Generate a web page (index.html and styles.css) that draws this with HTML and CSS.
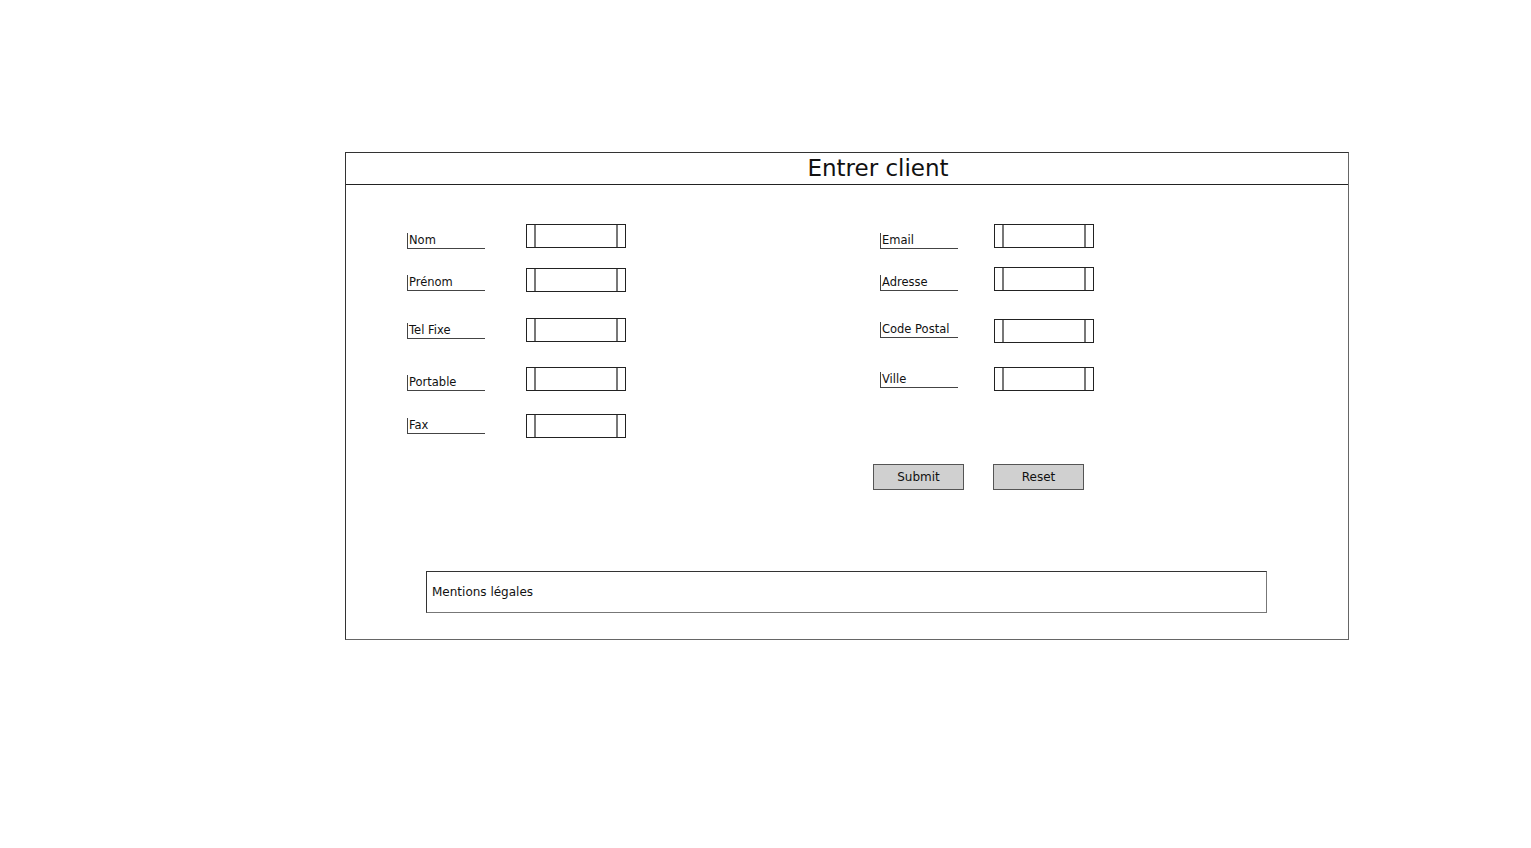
FILE: index.html
```html
<!DOCTYPE html>
<html lang="fr">
<head>
    <meta charset="UTF-8">
    <meta name="viewport" content="width=device-width, initial-scale=1.0">
    <title>Entrer client</title>
    <link rel="stylesheet" href="styles.css">
</head>
<body>
    <div class="page">
        <div class="frame">
            <div class="frame-title">Entrer client</div>
            <div class="frame-body">
                <div class="columns">
                    <div class="col col-left">
                        <div class="row"><span class="label">Nom</span><span class="field"><span class="field-inner"></span></span></div>
                        <div class="row"><span class="label">Prénom</span><span class="field"><span class="field-inner"></span></span></div>
                        <div class="row"><span class="label">Tel Fixe</span><span class="field"><span class="field-inner"></span></span></div>
                        <div class="row"><span class="label">Portable</span><span class="field"><span class="field-inner"></span></span></div>
                        <div class="row"><span class="label">Fax</span><span class="field"><span class="field-inner"></span></span></div>
                    </div>
                    <div class="col col-right">
                        <div class="row"><span class="label">Email</span><span class="field"><span class="field-inner"></span></span></div>
                        <div class="row"><span class="label">Adresse</span><span class="field"><span class="field-inner"></span></span></div>
                        <div class="row"><span class="label">Code Postal</span><span class="field"><span class="field-inner"></span></span></div>
                        <div class="row"><span class="label">Ville</span><span class="field"><span class="field-inner"></span></span></div>
                        <div class="actions">
                            <button class="btn">Submit</button>
                            <button class="btn">Reset</button>
                        </div>
                    </div>
                </div>
                <div class="legal">Mentions légales</div>
            </div>
        </div>
    </div>
</body>
</html>
```

FILE: styles.css
```css
body {
    margin: 0;
    background: #ffffff;
    font-family: "DejaVu Sans", "Liberation Sans", sans-serif;
    color: #111111;
}
.page {
    padding: 152px 0 0 345px;
}
.frame {
    width: 1002px;
    border: 1px solid #333333;
    border-right-color: #666666;
    border-bottom-color: #666666;
}
.frame-title {
    height: 31px;
    border-bottom: 1px solid #222222;
    padding-left: 62px;
    text-align: center;
    font-size: 23px;
    line-height: 31px;
}
.frame-body {
    padding: 39px 0 26px 0;
}
.columns {
    display: flex;
    padding-left: 61px;
}
.col {
    display: flex;
    flex-direction: column;
}
.col-left {
    width: 466px;
}
.col-right .row {
    padding-left: 7px;
}
.row {
    display: flex;
    align-items: flex-end;
    height: 24px;
}
.label {
    width: 76px;
    height: 15px;
    border-left: 1px solid #444444;
    border-bottom: 1px solid #444444;
    font-size: 11.5px;
    line-height: 15px;
    padding-left: 1px;
    white-space: nowrap;
    margin-bottom: -1px;
}
.col-left .label {
    margin-right: 41px;
}
.col-right .label {
    margin-right: 36px;
}
.field {
    display: block;
    width: 98px;
    height: 22px;
    border: 1px solid #222222;
}
.field-inner {
    display: block;
    height: 100%;
    margin: 0 7px;
    border-left: 2px solid #777777;
    border-right: 2px solid #777777;
}
.col-left .row:nth-child(2) { margin-top: 20px; }
.col-left .row:nth-child(3) { margin-top: 26px; }
.col-left .row:nth-child(4) { margin-top: 25px; }
.col-left .row:nth-child(5) { margin-top: 23px; }
.col-right .row:nth-child(2) { margin-top: 19px; }
.col-right .row:nth-child(3) { margin-top: 28px; }
.col-right .row:nth-child(4) { margin-top: 24px; }
.col-left .row:nth-child(2) .label { margin-bottom: 1px; }
.col-left .row:nth-child(3) .label { margin-bottom: 3px; }
.col-left .row:nth-child(4) .label { margin-bottom: 0; }
.col-left .row:nth-child(5) .label { margin-bottom: 4px; }
.col-right .row:nth-child(2) .label { margin-bottom: 0; }
.col-right .row:nth-child(3) .label { margin-bottom: 5px; }
.col-right .row:nth-child(4) .label { margin-bottom: 3px; }
.actions {
    display: flex;
    gap: 29px;
    margin-top: 73px;
}
.btn {
    width: 91px;
    height: 26px;
    background: #d0d0d0;
    border: 1px solid #555555;
    border-radius: 0;
    font-family: inherit;
    font-size: 12px;
    color: #111111;
    padding: 0;
}
.legal {
    margin: 81px 0 0 80px;
    width: 834px;
    height: 40px;
    border: 1px solid #333333;
    border-right-color: #777777;
    border-bottom-color: #777777;
    padding-left: 5px;
    font-size: 12px;
    line-height: 40px;
}
```
